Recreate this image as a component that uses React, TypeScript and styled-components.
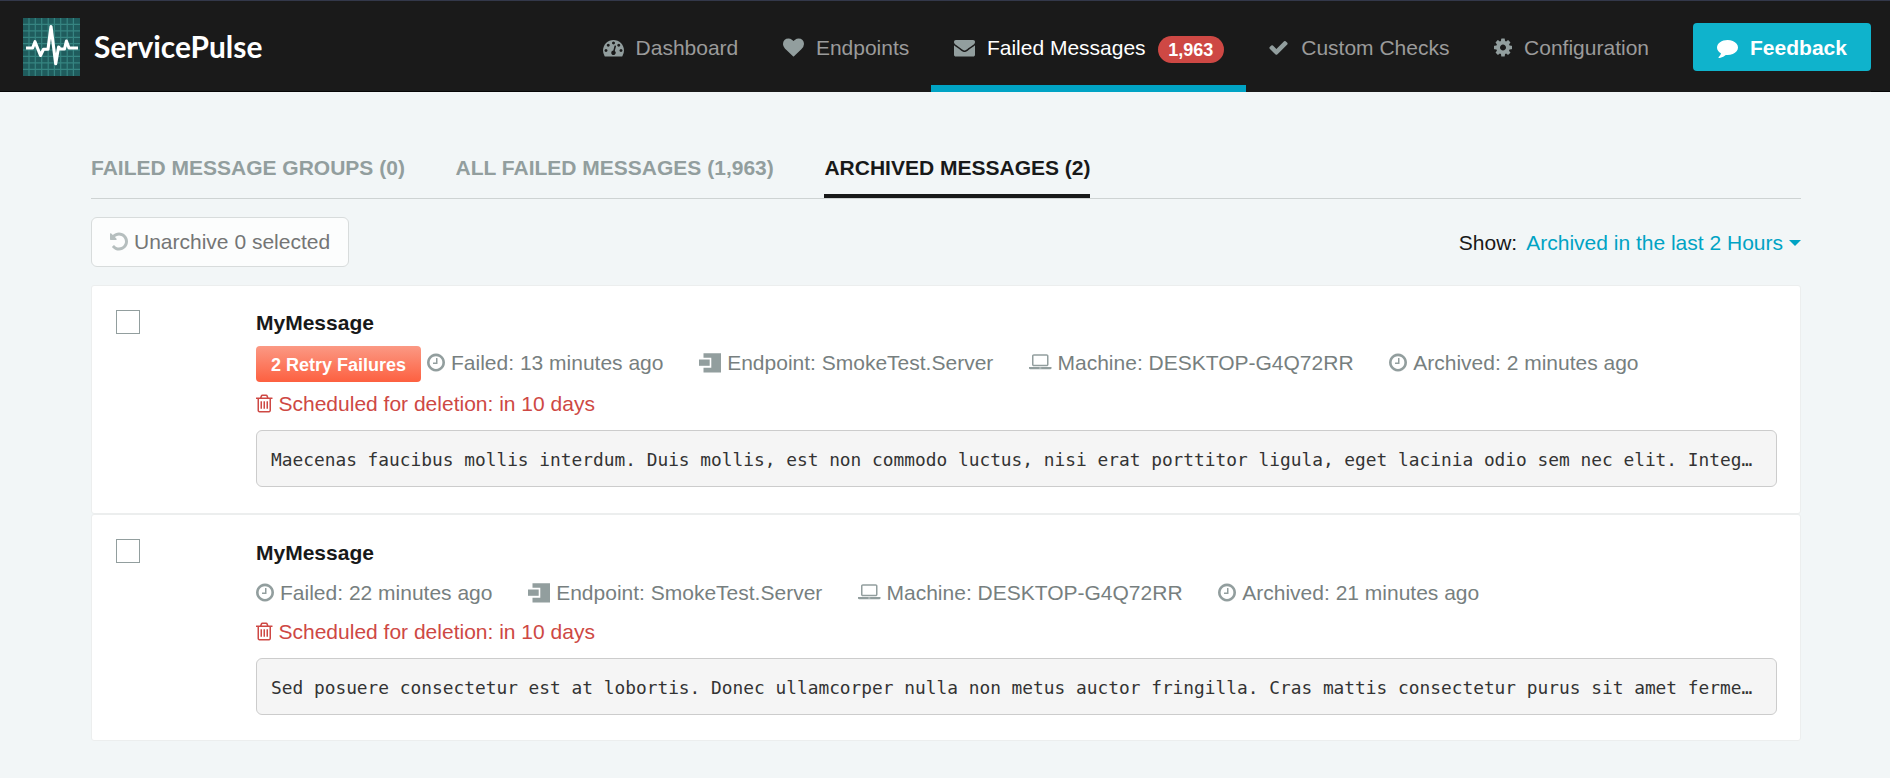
import React from "react";
import styled, { createGlobalStyle, css } from "styled-components";

const GlobalStyle = createGlobalStyle`
  * { box-sizing: border-box; }
  body {
    margin: 0;
    background: #f2f6f7;
    color: #181919;
    font-family: "Liberation Sans", Arial, sans-serif;
    font-size: 21px;
    line-height: 30px;
  }
`;

/* ---------- icons ---------- */

type Glyph = { x: number; w: number; d: string };

const glyphs: Record<string, Glyph> = {
  dashboard: { x: 0, w: 1792, d: "M384 1152q0-53-37.5-90.5t-90.5-37.5-90.5 37.5-37.5 90.5 37.5 90.5 90.5 37.5 90.5-37.5 37.5-90.5zm192-448q0-53-37.5-90.5t-90.5-37.5-90.5 37.5-37.5 90.5 37.5 90.5 90.5 37.5 90.5-37.5 37.5-90.5zm428 481l101-382q6-26-7.5-48.5t-38.5-29.5-48 6.5-30 39.5l-101 382q-60 5-107 43.5t-63 98.5q-20 77 20 146t117 89 146-20 89-117q16-60-6-117t-72-91zm660-33q0-53-37.5-90.5t-90.5-37.5-90.5 37.5-37.5 90.5 37.5 90.5 90.5 37.5 90.5-37.5 37.5-90.5zm-640-640q0-53-37.5-90.5t-90.5-37.5-90.5 37.5-37.5 90.5 37.5 90.5 90.5 37.5 90.5-37.5 37.5-90.5zm448 192q0-53-37.5-90.5t-90.5-37.5-90.5 37.5-37.5 90.5 37.5 90.5 90.5 37.5 90.5-37.5 37.5-90.5zm320 448q0 261-141 483-19 29-54 29h-1402q-35 0-54-29-141-221-141-483 0-182 71-348t191-286 286-191 348-71 348 71 286 191 191 286 71 348z" },
  heart: { x: 0, w: 1792, d: "M896 1664q-26 0-44-18l-624-602q-10-8-27.5-26t-55.5-65.5-68-97.5-53.5-121-23.5-138q0-220 127-344t351-124q62 0 126.5 21.5t120 58 95.5 68.5 76 68q36-36 76-68t95.5-68.5 120-58 126.5-21.5q224 0 351 124t127 344q0 221-229 450l-623 600q-18 18-44 18z" },
  envelope: { x: 0, w: 1792, d: "M1792 710v794q0 66-47 113t-113 47h-1472q-66 0-113-47t-47-113v-794q44 49 101 87 362 246 497 345 57 42 92.5 65.5t94.5 48 110 24.5h2q51 0 110-24.5t94.5-48 92.5-65.5q170-123 498-345 57-39 100-87zm0-294q0 79-49 151t-122 123q-376 261-468 325-10 7-42.5 31t-54 38.5-52 32.5-57.5 27-50 9h-2q-23 0-50-9t-57.5-27-52-32.5-54-38.5-42.5-31q-91-64-262-182.5t-205-142.5q-62-42-117-115.5t-55-136.5q0-78 41.5-130t118.5-52h1472q65 0 112.5 47t47.5 113z" },
  check: { x: 0, w: 1792, d: "M1671 566q0 40-28 68l-724 724-136 136q-28 28-68 28t-68-28l-136-136-362-362q-28-28-28-68t28-68l136-136q28-28 68-28t68 28l294 295 656-657q28-28 68-28t68 28l136 136q28 28 28 68z" },
  cog: { x: 128, w: 1536, d: "M1152 896q0-106-75-181t-181-75-181 75-75 181 75 181 181 75 181-75 75-181zm512-109v222q0 12-8 23t-20 13l-185 28q-19 54-39 91 35 50 107 138 10 12 10 25t-9 23q-27 37-99 108t-94 71q-12 0-26-9l-138-108q-44 23-91 38-16 136-29 186-7 28-36 28h-222q-14 0-24.5-8.5t-11.5-21.5l-28-184q-49-16-90-37l-141 107q-10 9-25 9-14 0-25-11-126-114-165-168-7-10-7-23 0-12 8-23 15-21 51-66.5t54-70.5q-27-50-41-99l-183-27q-13-2-21-12.5t-8-23.5v-222q0-12 8-23t19-13l186-28q14-46 39-92-40-57-107-138-10-12-10-24 0-10 9-23 26-36 98.5-107.5t94.5-71.5q13 0 26 10l138 107q44-23 91-38 16-136 29-186 7-28 36-28h222q14 0 24.5 8.5t11.5 21.5l28 184q49 16 90 37l142-107q9-9 24-9 13 0 25 10 129 119 165 170 7 8 7 22 0 12-8 23-15 21-51 66.5t-54 70.5q26 50 41 98l183 28q13 2 21 12.5t8 23.5z" },
  comment: { x: 0, w: 1792, d: "M1792 896q0 174-120 321.5t-326 233-450 85.5q-70 0-145-8-198 175-460 242-49 14-114 22-17 2-30.5-9t-17.5-29v-1q-3-4-.5-12t2-10 4.5-9.5l6-9 7-8.5 8-9q7-8 31-34.5t34.5-38 31-39.5 32.5-51 27-59 26-76q-157-89-247.5-220t-90.5-281q0-130 71-248.5t191-204.5 286-136.5 348-50.5q244 0 450 85.5t326 233 120 321.5z" },
  undo: { x: 128, w: 1536, d: "M1664 896q0 156-61 298t-164 245-245 164-298 61q-172 0-327-72.5t-264-204.5q-7-10-6.5-22.5t8.5-20.5l137-138q10-9 25-9 16 2 23 12 73 95 179 147t225 52q104 0 198.5-40.5t163.5-109.5 109.5-163.5 40.5-198.5-40.5-198.5-109.5-163.5-163.5-109.5-198.5-40.5q-98 0-188 35.5t-160 101.5l137 138q31 30 14 69-17 40-59 40h-448q-26 0-45-19t-19-45v-448q0-42 40-59 39-17 69 14l130 129q107-101 244.5-156.5t284.5-55.5q156 0 298 61t245 164 164 245 61 298z" },
  clock: { x: 128, w: 1536, d: "M1024 544v448q0 14-9 23t-23 9h-320q-14 0-23-9t-9-23v-64q0-14 9-23t23-9h224v-352q0-14 9-23t23-9h64q14 0 23 9t9 23zm416 352q0-148-73-273t-198-198-273-73-273 73-198 198-73 273 73 273 198 198 273 73 273-73 198-198 73-273zm224 0q0 209-103 385.5t-279.5 279.5-385.5 103-385.5-103-279.5-279.5-103-385.5 103-385.5 279.5-279.5 385.5-103 385.5 103 279.5 279.5 103 385.5z" },
  trash: { x: 192, w: 1408, d: "M704 736v576q0 14-9 23t-23 9h-64q-14 0-23-9t-9-23v-576q0-14 9-23t23-9h64q14 0 23 9t9 23zm256 0v576q0 14-9 23t-23 9h-64q-14 0-23-9t-9-23v-576q0-14 9-23t23-9h64q14 0 23 9t9 23zm256 0v576q0 14-9 23t-23 9h-64q-14 0-23-9t-9-23v-576q0-14 9-23t23-9h64q14 0 23 9t9 23zm128 724v-948h-896v948q0 22 7 40.5t14.5 27 10.5 8.5h832q3 0 10.5-8.5t14.5-27 7-40.5zm-672-1076h448l-48-117q-7-9-17-11h-317q-10 2-17 11zm928 32v64q0 14-9 23t-23 9h-96v948q0 83-47 143.5t-113 60.5h-832q-66 0-113-58.5t-47-141.5v-952h-96q-14 0-23-9t-9-23v-64q0-14 9-23t23-9h309l70-167q15-37 54-63t79-26h320q40 0 79 26t54 63l70 167h309q14 0 23 9t9 23z" },
  laptop: { x: 0, w: 1920, d: "M416 1216q-66 0-113-47t-47-113v-704q0-66 47-113t113-47h1088q66 0 113 47t47 113v704q0 66-47 113t-113 47h-1088zm-32-864v704q0 13 9.5 22.5t22.5 9.5h1088q13 0 22.5-9.5t9.5-22.5v-704q0-13-9.5-22.5t-22.5-9.5h-1088q-13 0-22.5 9.5t-9.5 22.5zm1376 928h160v96q0 40-47 68t-113 28h-1600q-66 0-113-28t-47-68v-96h1760zm-720 96q16 0 16-16t-16-16h-160q-16 0-16 16t16 16h160z" },
};

const IconSvg = styled.svg`
  display: block;
  flex: none;
  height: 21px;
  margin-bottom: 2px;
  fill: currentColor;
`;

const Icon = ({ name }: { name: string }) => {
  const g = glyphs[name];
  return (
    <IconSvg viewBox={`${g.x} 0 ${g.w} 1792`} width={(g.w / 1792) * 21} aria-hidden>
      <path d={g.d} />
    </IconSvg>
  );
};

const EndpointIcon = () => (
  <IconSvg viewBox="0 0 22 21" width={22} aria-hidden>
    <path d="M4.500 1.300H22V20.500H4.500V15.800H12.300V5.700H4.500z" />
    <path d="M0 7.500H10.700V13.800H0z" />
  </IconSvg>
);

const LogoSvg = styled.svg`
  display: block;
  flex: none;
  margin-top: 3px;
`;

const columns = [6, 12.3, 18.7, 25.2, 31.4, 37.7, 44.2, 50.4];
const rows = [6.4, 12.9, 19.3, 25.7, 32, 38.4, 44.8, 51.3];

const Logo = () => (
  <LogoSvg width={57} height={58} viewBox="0 0 57 58" aria-hidden>
    <rect width="57" height="58" fill="#1f5c5d" />
    <g stroke="#368481" strokeWidth="1.200">
      {columns.map((x) => <path key={x} d={`M${x} 0V58`} />)}
      {rows.map((y) => <path key={y} d={`M0 ${y}H57`} />)}
    </g>
    <path
      d="M3 30H9.600L12 23.700L17.500 37.500L20.500 31.300H25L28 8.500L32.700 45.800L35.600 29L37 31H41.500L43.400 23L46 30H55"
      fill="none"
      stroke="#fff"
      strokeWidth="3.100"
      strokeLinejoin="round"
    />
  </LogoSvg>
);

/* ---------- header ---------- */

const Header = styled.header`
  display: flex;
  justify-content: space-between;
  height: 92px;
  padding: 0 19px 0 23px;
  background: #1a1a1a;
  border-top: 1px solid #33384a;
  box-shadow: inset 0 -1px #060606;
`;

const Brand = styled.a`
  display: flex;
  align-items: center;
  gap: 14px;
  padding-bottom: 2px;
  color: #fff;
  font: 700 29.900px/40px Lato, sans-serif;
`;

const Nav = styled.nav`
  display: flex;
  background: #1a1a1a;
`;

const NavItem = styled.a<{ $active?: boolean }>`
  display: flex;
  align-items: center;
  gap: 12px;
  padding: 3px 22px 0 22.600px;
  color: ${(p) => (p.$active ? "#fff" : "#9b9b9b")};
  ${(p) => p.$active && css`box-shadow: inset 0 -7px #00a3c4;`}

  svg {
    margin-bottom: 1px;
    color: #929e9e;
  }
`;

const Badge = styled.span`
  height: 27px;
  margin-top: 3px;
  padding: 0 10.500px;
  border-radius: 14px;
  background: #ce4844;
  color: #fff;
  font-size: 18px;
  font-weight: 700;
  line-height: 28px;
`;

const Feedback = styled.button`
  display: flex;
  align-items: center;
  justify-content: center;
  gap: 12px;
  align-self: flex-start;
  width: 178px;
  height: 48px;
  margin: 22px 0 0 22px;
  padding: 2px 0 0;
  border: 0;
  border-radius: 4px;
  background: #0fb3cc;
  color: #fff;
  font: 700 21px/30px "Liberation Sans", Arial, sans-serif;
`;

/* ---------- page ---------- */

const Page = styled.main`
  padding: 52px 89px 0 91px;
`;

const Tabs = styled.div`
  display: flex;
  gap: 50.700px;
  height: 55px;
  border-bottom: 1px solid #ced3d3;
`;

const Tab = styled.a<{ $active?: boolean }>`
  padding-top: 9px;
  border-bottom: ${(p) => (p.$active ? "4px solid #181919" : "0")};
  color: ${(p) => (p.$active ? "#181919" : "#929e9e")};
  font-weight: 700;
  text-transform: uppercase;
`;

const Toolbar = styled.div`
  display: flex;
  align-items: center;
  justify-content: space-between;
  padding: 18px 0 18px;
`;

const UnarchiveButton = styled.button`
  display: flex;
  align-items: center;
  gap: 6px;
  height: 50px;
  width: 258px;
  padding: 0 0 0 18px;
  border: 1px solid #d8dcdc;
  border-radius: 6px;
  background: #fcfdfd;
  color: #747575;
  font: 21px/30px "Liberation Sans", Arial, sans-serif;

  svg { color: #b5bebe; }
`;

const Filter = styled.div`
  display: flex;
  align-items: center;
  padding-top: 2px;
`;

const FilterLink = styled.a`
  display: flex;
  align-items: center;
  gap: 6px;
  margin-left: 9px;
  color: #00a3c4;
`;

const Caret = styled.span`
  border: 6px solid transparent;
  border-top-color: currentColor;
  border-bottom: 0;
`;

const Card = styled.article<{ $tall?: boolean }>`
  display: flex;
  height: ${(p) => (p.$tall ? 229 : 227)}px;
  padding: 24px 23px 0 24px;
  border: 1px solid #eceeee;
  border-radius: 3px;
  background: #fff;
`;

const Checkbox = styled.span`
  flex: none;
  width: 24px;
  height: 24px;
  margin-right: 116px;
  border: 1px solid #929e9e;
`;

const Body = styled.div<{ $tall?: boolean }>`
  flex: 1;
  min-width: 0;
  margin-top: ${(p) => (p.$tall ? -2 : -1)}px;
`;

const Title = styled.h3`
  margin: 0 0 6px;
  font-size: 21px;
  font-weight: 700;
  line-height: 30px;
`;

const Meta = styled.div`
  display: flex;
  align-items: center;
  height: 38px;
  color: #777f7f;

  svg { color: #929e9e; }
`;

const MetaItem = styled.span`
  display: flex;
  align-items: center;
  gap: 6px;
  margin-right: 35.700px;
  white-space: nowrap;
`;

const RetryLabel = styled.span`
  width: 165px;
  height: 36px;
  margin: 2px 6px 0 0;
  border-radius: 4px;
  background: linear-gradient(#fb9984, #fd6040);
  color: #fff;
  font-size: 18px;
  font-weight: 700;
  line-height: 38px;
  text-align: center;
`;

const Deletion = styled.div<{ $tall?: boolean }>`
  display: flex;
  align-items: center;
  gap: 6px;
  height: 30px;
  margin-top: ${(p) => (p.$tall ? 7 : 5)}px;
  color: #ce4844;
`;

const Exception = styled.pre`
  height: 57px;
  margin: 11px 0 0;
  padding: 0 18px 0 14px;
  overflow: hidden;
  border: 1px solid #ccc;
  border-radius: 6px;
  background: #f5f5f5;
  color: #333;
  font: 17.840px/57px "DejaVu Sans Mono", monospace;
  text-overflow: ellipsis;
  white-space: nowrap;
`;

type Message = { retries?: string; failed: string; archived: string; text: string };

const messages: Message[] = [
  {
    retries: "2 Retry Failures",
    failed: "13 minutes ago",
    archived: "2 minutes ago",
    text: "Maecenas faucibus mollis interdum. Duis mollis, est non commodo luctus, nisi erat porttitor ligula, eget lacinia odio sem nec elit. Integ…",
  },
  {
    failed: "22 minutes ago",
    archived: "21 minutes ago",
    text: "Sed posuere consectetur est at lobortis. Donec ullamcorper nulla non metus auctor fringilla. Cras mattis consectetur purus sit amet ferme…",
  },
];

const MessageCard = ({ m }: { m: Message }) => {
  const tall = !!m.retries;
  return (
    <Card $tall={tall}>
      <Checkbox />
      <Body $tall={tall}>
        <Title>MyMessage</Title>
        <Meta>
          {m.retries && <RetryLabel>{m.retries}</RetryLabel>}
          <MetaItem><Icon name="clock" />Failed: {m.failed}</MetaItem>
          <MetaItem><EndpointIcon />Endpoint: SmokeTest.Server</MetaItem>
          <MetaItem><Icon name="laptop" />Machine: DESKTOP-G4Q72RR</MetaItem>
          <MetaItem><Icon name="clock" />Archived: {m.archived}</MetaItem>
        </Meta>
        <Deletion $tall={tall}><Icon name="trash" />Scheduled for deletion: in 10 days</Deletion>
        <Exception>{m.text}</Exception>
      </Body>
    </Card>
  );
};

export default function App() {
  return (
    <>
      <GlobalStyle />
      <Header>
        <Brand><Logo />ServicePulse</Brand>
        <Nav>
          <NavItem><Icon name="dashboard" />Dashboard</NavItem>
          <NavItem><Icon name="heart" />Endpoints</NavItem>
          <NavItem $active><Icon name="envelope" />Failed Messages<Badge>1,963</Badge></NavItem>
          <NavItem><Icon name="check" />Custom Checks</NavItem>
          <NavItem><Icon name="cog" />Configuration</NavItem>
          <Feedback><Icon name="comment" />Feedback</Feedback>
        </Nav>
      </Header>
      <Page>
        <Tabs>
          <Tab>Failed Message Groups (0)</Tab>
          <Tab>All Failed Messages (1,963)</Tab>
          <Tab $active>Archived Messages (2)</Tab>
        </Tabs>
        <Toolbar>
          <UnarchiveButton><Icon name="undo" />Unarchive 0 selected</UnarchiveButton>
          <Filter>
            Show:<FilterLink>Archived in the last 2 Hours<Caret /></FilterLink>
          </Filter>
        </Toolbar>
        {messages.map((m) => <MessageCard key={m.text} m={m} />)}
      </Page>
    </>
  );
}
